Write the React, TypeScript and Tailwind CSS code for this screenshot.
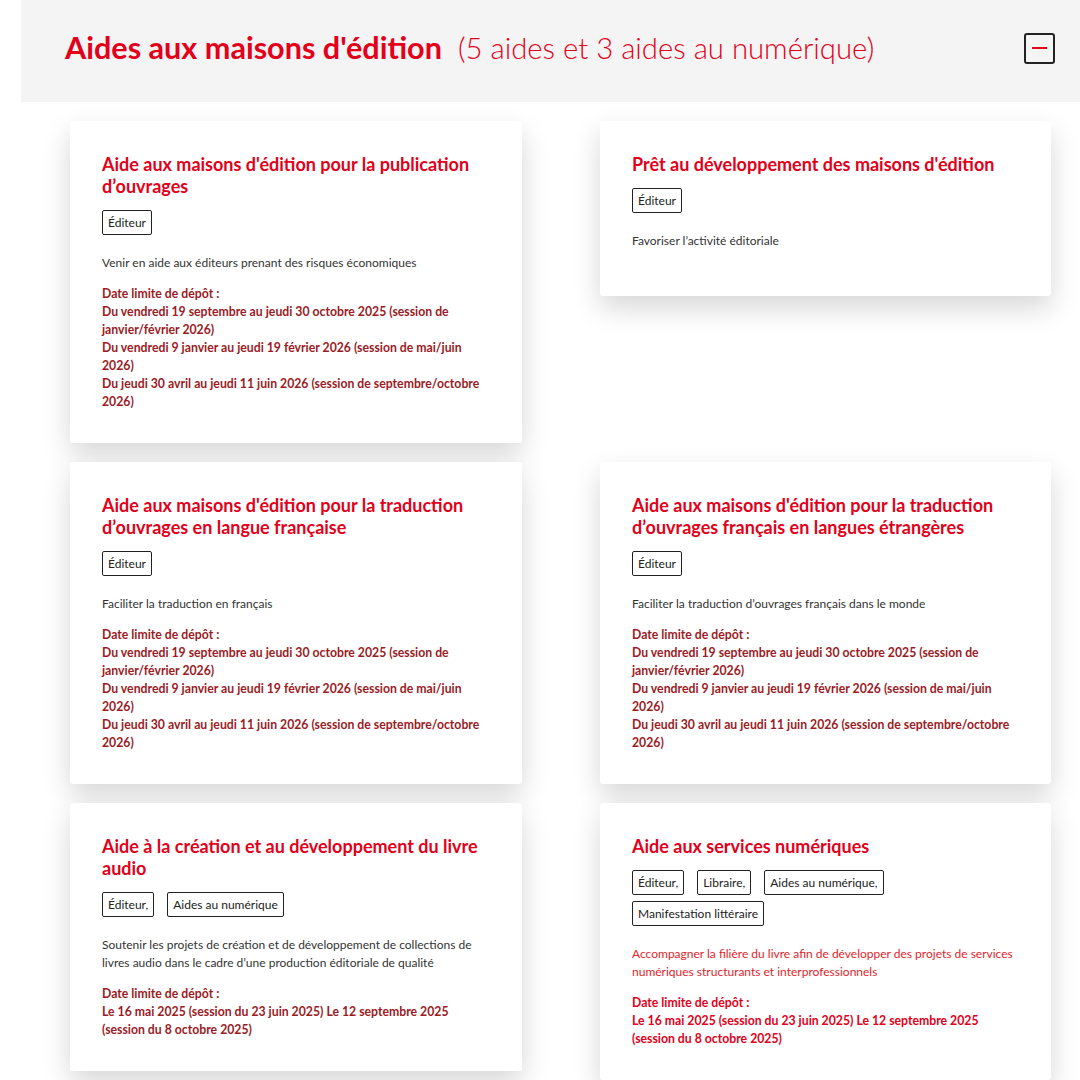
import React from 'react';

type Aide = {
  title: string;
  tags: string[];
  description: string;
  dates?: string[];
  highlight?: boolean;
};

const aides: Aide[] = [
  {
    title: "Aide aux maisons d'édition pour la publication d’ouvrages",
    tags: ['Éditeur'],
    description: 'Venir en aide aux éditeurs prenant des risques économiques',
    dates: [
      'Du vendredi 19 septembre au jeudi 30 octobre 2025 (session de janvier/février 2026)',
      'Du vendredi 9 janvier au jeudi 19 février 2026 (session de mai/juin 2026)',
      'Du jeudi 30 avril au jeudi 11 juin 2026 (session de septembre/octobre 2026)',
    ],
  },
  {
    title: "Prêt au développement des maisons d'édition",
    tags: ['Éditeur'],
    description: 'Favoriser l’activité éditoriale',
  },
  {
    title: "Aide aux maisons d'édition pour la traduction d’ouvrages en langue française",
    tags: ['Éditeur'],
    description: 'Faciliter la traduction en français',
    dates: [
      'Du vendredi 19 septembre au jeudi 30 octobre 2025 (session de janvier/février 2026)',
      'Du vendredi 9 janvier au jeudi 19 février 2026 (session de mai/juin 2026)',
      'Du jeudi 30 avril au jeudi 11 juin 2026 (session de septembre/octobre 2026)',
    ],
  },
  {
    title: "Aide aux maisons d'édition pour la traduction d’ouvrages français en langues étrangères",
    tags: ['Éditeur'],
    description: 'Faciliter la traduction d’ouvrages français dans le monde',
    dates: [
      'Du vendredi 19 septembre au jeudi 30 octobre 2025 (session de janvier/février 2026)',
      'Du vendredi 9 janvier au jeudi 19 février 2026 (session de mai/juin 2026)',
      'Du jeudi 30 avril au jeudi 11 juin 2026 (session de septembre/octobre 2026)',
    ],
  },
  {
    title: 'Aide à la création et au développement du livre audio',
    tags: ['Éditeur,', 'Aides au numérique'],
    description:
      'Soutenir les projets de création et de développement de collections de livres audio dans le cadre d’une production éditoriale de qualité',
    dates: ['Le 16 mai 2025 (session du 23 juin 2025) Le 12 septembre 2025 (session du 8 octobre 2025)'],
  },
  {
    title: 'Aide aux services numériques',
    tags: ['Éditeur,', 'Libraire,', 'Aides au numérique,', 'Manifestation littéraire'],
    description:
      'Accompagner la filière du livre afin de développer des projets de services numériques structurants et interprofessionnels',
    dates: ['Le 16 mai 2025 (session du 23 juin 2025) Le 12 septembre 2025 (session du 8 octobre 2025)'],
    highlight: true,
  },
];

const AideCard: React.FC<{ aide: Aide }> = ({ aide }) => (
  <div className="bg-white rounded-[3px] shadow-[0_12px_28px_rgba(0,0,0,0.16)] px-8 pt-8 pb-8">
    <h3 className="text-[18px] leading-[22px] font-bold text-[#e2001a]">{aide.title}</h3>
    <div className="mt-[13px] flex flex-wrap gap-x-[13px] gap-y-[6px]">
      {aide.tags.map((tag) => (
        <span
          key={tag}
          className="h-[25px] px-[5px] border border-[#222] rounded-[2px] text-[12px] leading-[23px] text-[#222]"
        >
          {tag}
        </span>
      ))}
    </div>
    <p
      className={`mt-[19px] text-[12px] leading-[18px] ${
        aide.highlight ? 'text-[#e3242b]' : 'text-[#333]'
      } ${aide.dates ? '' : 'mb-[14px]'}`}
    >
      {aide.description}
    </p>
    {aide.dates && (
      <div
        className={`mt-[13px] text-[12.25px] leading-[18px] font-bold ${
          aide.highlight ? 'text-[#e2001a]' : 'text-[#9b1b24]'
        }`}
      >
        <p>Date limite de dépôt :</p>
        {aide.dates.map((d) => (
          <p key={d}>{d}</p>
        ))}
      </div>
    )}
  </div>
);

export default function App() {
  return (
    <div className="min-h-screen bg-white font-['Lato',sans-serif]">
      <div className="ml-[21px] h-[102px] bg-[#f4f4f4] flex items-center justify-between pl-[44px] pr-[25px] pb-[6px]">
        <h2 className="text-[#e2001a] flex items-baseline">
          <span className="text-[30.6px] font-bold">Aides aux maisons d'édition</span>
          <span className="ml-4 text-[29.3px] font-light">(5 aides et 3 aides au numérique)</span>
        </h2>
        <button className="w-[31px] h-[31px] border-2 border-[#222] rounded-[3px] flex items-center justify-center">
          <span className="block w-[15px] h-[2px] bg-[#e2001a]" />
        </button>
      </div>
      <div className="grid grid-cols-[452px_451px] gap-x-[78px] gap-y-[19px] pl-[70px] pt-[19px] pb-10 items-start">
        {aides.map((aide) => (
          <AideCard key={aide.title} aide={aide} />
        ))}
      </div>
    </div>
  );
}
